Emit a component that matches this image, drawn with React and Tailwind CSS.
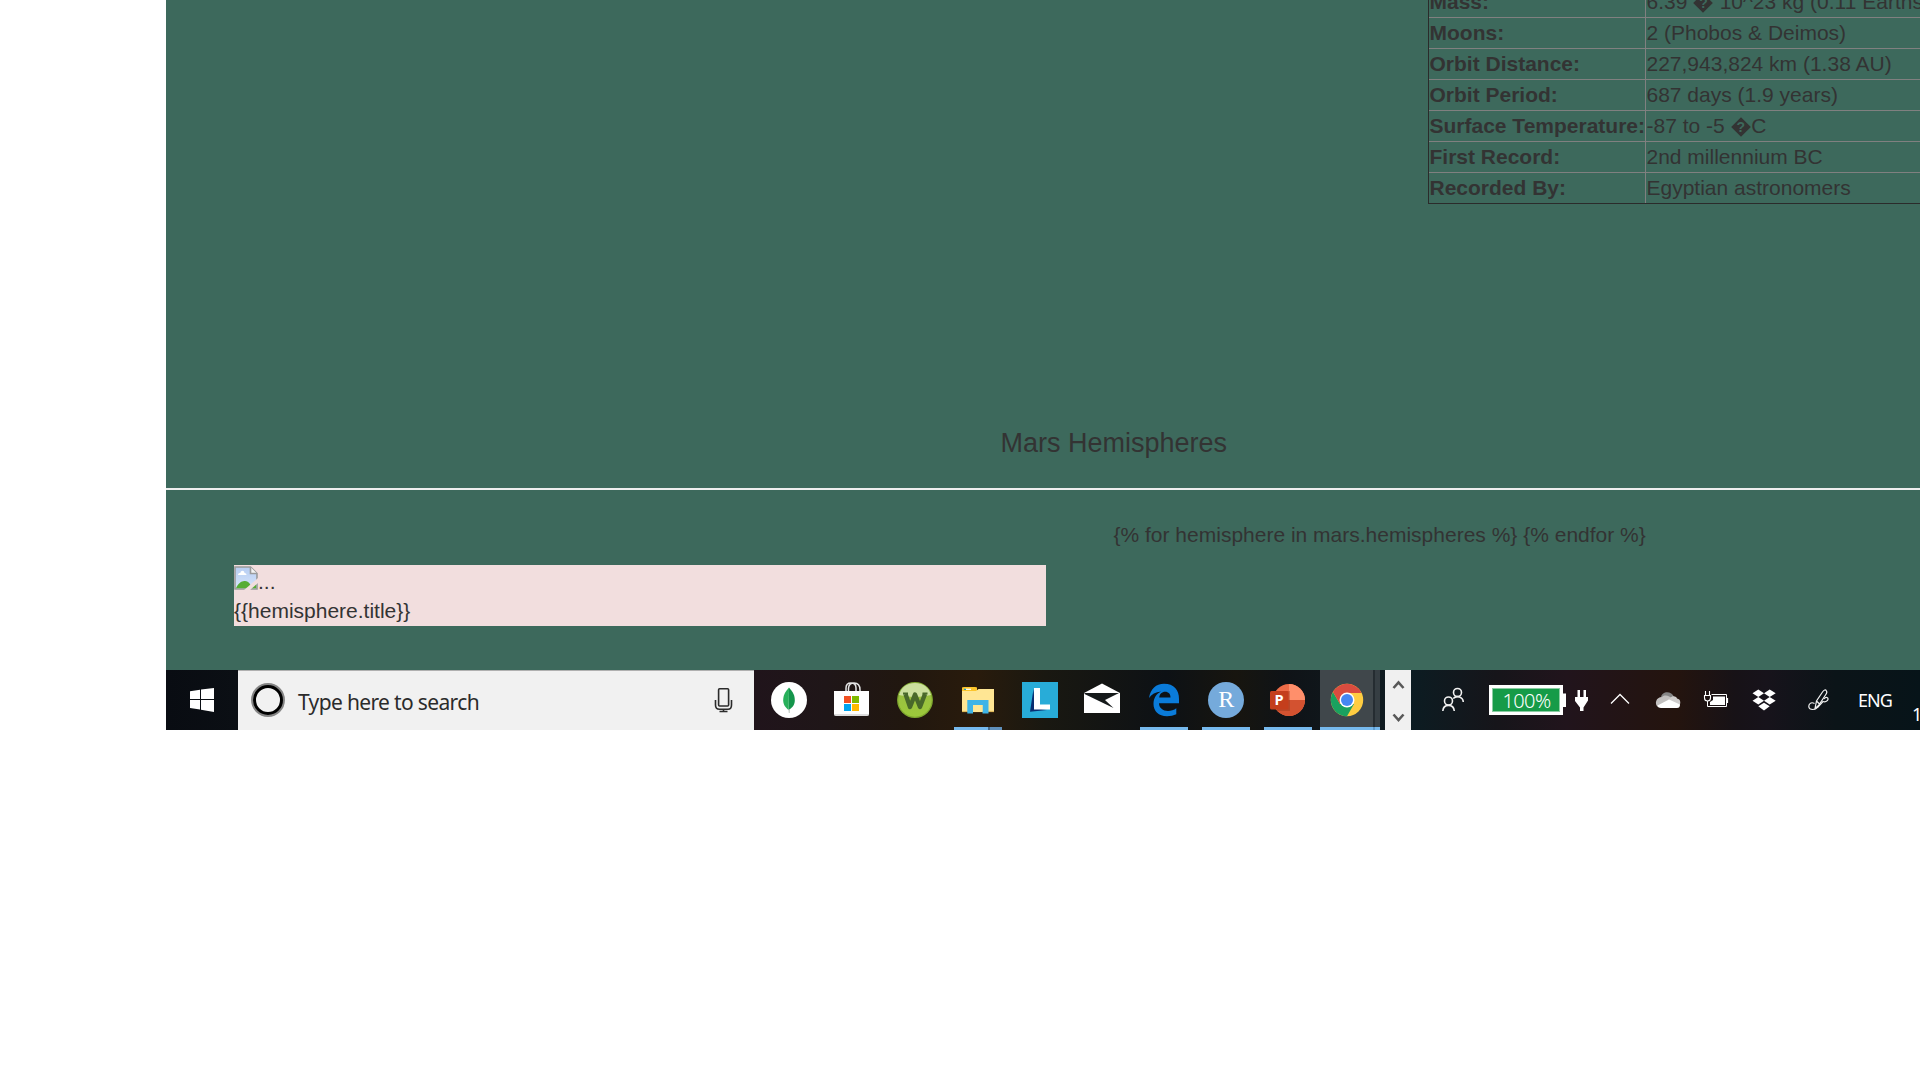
import React from "react";

const arial = "font-['Liberation_Sans',Arial,sans-serif]";

const facts = [
  ["Mass:", "6.39 \uFFFD 10^23 kg (0.11 Earths)"],
  ["Moons:", "2 (Phobos & Deimos)"],
  ["Orbit Distance:", "227,943,824 km (1.38 AU)"],
  ["Orbit Period:", "687 days (1.9 years)"],
  ["Surface Temperature:", "-87 to -5 \uFFFDC"],
  ["First Record:", "2nd millennium BC"],
  ["Recorded By:", "Egyptian astronomers"],
];

function Diamond() {
  return (
    <span className="relative inline-block h-[20px] w-[20.6px] align-[-4px]">
      <svg className="absolute inset-0" width="20" height="20" viewBox="0 0 20 20">
        <path d="M10 .2 19.8 10 10 19.8 .2 10Z" fill="#333" />
      </svg>
      <span className="absolute inset-0 text-center text-[14px] leading-[20px] font-bold text-[#3d695c]">?</span>
    </span>
  );
}

function FactTable() {
  return (
    <div className="ml-[1262px] -mt-[13px] w-[560px] border-b border-l border-[#2b2b2b]">
      {facts.map(([k, v], i) => (
        <div key={k} className={i === 6 ? "flex h-[30px]" : "flex h-[31px] border-b border-[#808080]"}>
          <div className="w-[217px] shrink-0 border-r border-[#808080] pl-[0.5px] font-bold leading-[29px] whitespace-nowrap">{k}</div>
          <div className="pl-[0.5px] leading-[29px] whitespace-nowrap">
            {v.split("\uFFFD").map((s, j) => (
              <React.Fragment key={j}>
                {j > 0 && <Diamond />}
                {s}
              </React.Fragment>
            ))}
          </div>
        </div>
      ))}
    </div>
  );
}

// Each icon's viewBox starts at its own offset along the bar, so the drawings share one coordinate space.
function Cell({ x, w, children }) {
  return (
    <svg className="h-[60px] shrink-0" width={w} height="60" viewBox={`${x} 0 ${w} 60`}>
      {children}
    </svg>
  );
}

const blue = "#76b9ed";

function BrokenImage() {
  return (
    <svg className="shrink-0" width="24" height="24" viewBox="0 0 24 24">
      <defs>
        <linearGradient id="sky" x1="0" y1="0" x2="0" y2="1">
          <stop offset="0" stopColor="#b6cdf2" />
          <stop offset="1" stopColor="#d6e4fa" />
        </linearGradient>
      </defs>
      <path d="M1 1H16.5L23 7.5V23H1Z" fill="url(#sky)" stroke="#9a9a9a" strokeWidth="1.6" />
      <path d="M4 9c0-2 2-2 2.300-2 .5-3 4-3 4.200 0 1.500 0 2 1 2 2Z" fill="#fff" />
      <path d="M2 22.300c2-5 6-7.800 9-7.300 4 0 6 4 6.500 7.300Z" fill="#57ad35" />
      <path d="M16 22.300 22.200 17v5.300Z" fill="#57ad35" />
      <path d="M16.500 1V7.500H23" fill="#f4f4f4" stroke="#9a9a9a" strokeWidth="1.600" />
      <path d="M9.500 24.500 24.500 11.500V16.500L15.500 24.500Z" fill="#f2dede" />
    </svg>
  );
}

function Taskbar() {
  return (
    <div className="flex h-[60px] w-full bg-[linear-gradient(90deg,#090c12_0px,#0b0f14_72px,#20141b_588px,#1f1618_660px,#21170f_740px,#291b0c_810px,#191811_880px,#0d1115_1000px,#17150f_1070px,#0f1317_1120px,#101b20_1219px,#0c1c22_1245px,#16151a_1330px,#21141c_1400px,#24140e_1510px,#171217_1570px,#17131b_1600px,#0b1418_1670px,#071419_1754px)]">
      <Cell x={0} w={72}>
        <path d="M24 21.200 34 19.800V29H24ZM35 19.600 48 18V29H35ZM24 30H34V39.400L24 38ZM35 30H48V42L35 39.700Z" fill="#fff" />
      </Cell>
      <div className="flex h-[60px] w-[516px] shrink-0 border-t border-[#b0b0b0] bg-[#f1f1f1]">
        <svg width="60" height="59" viewBox="0 1 60 59" className="shrink-0">
          <circle cx="30" cy="30" r="15.600" fill="none" stroke="#858585" strokeWidth="2.700" />
          <circle cx="30" cy="30" r="13.500" fill="none" stroke="#000" strokeWidth="3" />
        </svg>
        <div className="w-[412px] font-['Noto_Sans','Open_Sans',sans-serif] text-[21px] leading-[62px] tracking-[-0.65px] text-[#2b2b2b]">Type here to search</div>
        <svg width="44" height="59" viewBox="544 1 44 59" className="shrink-0" fill="none" stroke="#2b2b2b" strokeWidth="1.600">
          <rect x="552.600" y="18.700" width="10" height="17.300" rx="1" />
          <path d="M549.500 30V35Q549.500 39.300 553.500 39.300H562Q565.500 39.300 565.500 35V30M557.500 39.300V41.500M553.500 41.500H561.500" />
        </svg>
      </div>

      {/* MongoDB Compass */}
      <Cell x={754} w={66}>
        <circle cx="789" cy="30" r="18" fill="#fff" />
        <path d="M789 17.500C785 22 783.200 25 783.200 30.500 783.200 35 786 38 788.600 40Z" fill="#27b05a" />
        <path d="M789 17.500C793 22 794.800 25 794.800 30.500 794.800 35 792 38 788.600 40Z" fill="#14954b" />
        <path d="M788.500 39H789.800L789.600 43H788.800Z" fill="#aebbb2" />
      </Cell>
      {/* Store */}
      <Cell x={820} w={62}>
        <path d="M846 22V18Q846 13 851 13 856 13 856 18V22M848.500 22V18Q849 13 854 13 860 13 860 20V22" fill="none" stroke="#e5e5e5" strokeWidth="1.500" />
        <path d="M834 21H869V44Q869 46 867 46H836Q834 46 834 44Z" fill="#fff" />
        <path d="M834.500 45H868.500" stroke="#bbb" strokeWidth="1" />
        <path d="M844 26H851V33H844Z" fill="#f25022" />
        <path d="M852 26H859V33H852Z" fill="#7fba00" />
        <path d="M844 34H851V41H844Z" fill="#00a4ef" />
        <path d="M852 34H859V41H852Z" fill="#ffb900" />
      </Cell>
      {/* Webroot */}
      <Cell x={882} w={64}>
        <defs>
          <linearGradient id="wr" x1="0" y1="0" x2="0" y2="1">
            <stop offset="0" stopColor="#9abd45" />
            <stop offset="1" stopColor="#9cc93a" />
          </linearGradient>
        </defs>
        <circle cx="915" cy="30" r="17.300" fill="url(#wr)" stroke="#7fa82f" strokeWidth="1.200" />
        <path d="M899 25C901 17 907 13 915 13S929 17 931 25Q915 29 899 25Z" fill="#d5e5ae" opacity=".85" />
        <path d="M905.500 24 910 37 915 24.500 920 37 925 24" fill="none" stroke="#49692a" strokeWidth="4.400" strokeLinejoin="round" />
        <path d="M903 23.500H908M922.500 23.500H927.500" stroke="#49692a" strokeWidth="2" />
      </Cell>
      {/* File Explorer */}
      <Cell x={946} w={62}>
        <path d="M962 19Q962 17 964 17H975Q977 17 977 19V22H962Z" fill="#fcc52d" />
        <path d="M962 21H976L978.500 19H994V42H962Z" fill="#ffe694" />
        <path d="M962 20.500H975L977 18.500V17.500H962Z" fill="#fcc52d" />
        <path d="M964.500 19.300H971" stroke="#fff" strokeWidth="1.200" />
        <path d="M964 19.300H966" stroke="#20a3b2" strokeWidth="1.200" />
        <path d="M962 41.500H994" stroke="#dfb95a" strokeWidth="1.200" />
        <path d="M967.300 30H988.500V43.500H982.500V35H973V43.500H967.300Z" fill="#3eb4e7" />
        <path d="M973 35H982.500V42H973Z" fill="#ffe694" />
        <path d="M954 57H988V60H954Z" fill={blue} />
        <path d="M988 57H990V60H988Z" fill="#46698a" />
        <path d="M990 57H1002V60H990Z" fill="#6090bb" />
      </Cell>
      {/* L tile */}
      <Cell x={1008} w={62}>
        <path d="M1022 12H1058V48H1022Z" fill="#28acd8" />
        <path d="M1033.500 19 1030 41.800 1047 40 1035 38Z" fill="#082d70" />
        <path d="M1034 18H1040V34.500H1050V39.500H1034Z" fill="#fff" />
      </Cell>
      {/* Mail */}
      <Cell x={1070} w={62}>
        <path d="M1084 23 1102 13.500 1120 23V43H1084Z" fill="#fff" />
        <path d="M1084.500 23H1119L1105 30 1113.500 38 1084.500 24Z" fill="#15191a" />
      </Cell>
      {/* Edge */}
      <Cell x={1132} w={62}>
        <path d="M1149 28C1150.500 19 1156 13.800 1164 13.800 1174 13.800 1179 20 1179 29V33.300H1159C1159 38 1163 41 1168 41 1171 41 1174 40 1176.300 38.300V44.200C1173.500 45.500 1170.500 46.200 1167 46.200 1158.500 46.200 1153.500 41 1153.500 34 1153.500 28 1156.500 23.800 1161 21.600 1155.500 22 1151.500 24.500 1149 28ZM1159.200 27.500H1170.500C1170.500 24 1168.500 21.800 1165.200 21.800S1159.700 24 1159.200 27.500Z" fill="#0a7bd9" fillRule="evenodd" />
        <path d="M1140 57H1188V60H1140Z" fill={blue} />
      </Cell>
      {/* RStudio */}
      <Cell x={1194} w={62}>
        <circle cx="1226" cy="30" r="18" fill="#75aadb" />
        <text x="1226.300" y="37" textAnchor="middle" fontFamily="Liberation Serif" fontSize="24" fill="#fff">R</text>
        <path d="M1202 57H1250V60H1202Z" fill={blue} />
      </Cell>
      {/* PowerPoint */}
      <Cell x={1256} w={64}>
        <circle cx="1289" cy="30" r="16" fill="#ed6c47" />
        <path d="M1289 14A16 16 0 0 1 1305 30H1289Z" fill="#ff8f6b" />
        <path d="M1273 30H1305A16 16 0 0 1 1273 30Z" fill="#d35230" />
        <path d="M1277 21H1290V41H1277Z" fill="#91361f" opacity=".4" />
        <rect x="1270" y="21" width="18.500" height="18.500" rx="1.500" fill="#c43e1c" />
        <text x="1279" y="35.200" textAnchor="middle" fontFamily="Open Sans" fontWeight="bold" fontSize="14.500" fill="#fff">P</text>
        <path d="M1264 57H1312V60H1264Z" fill={blue} />
      </Cell>
      {/* Chrome */}
      <Cell x={1320} w={65}>
        <path d="M1320 0H1373V60H1320Z" fill="#40474b" />
        <path d="M1373 0H1375V60H1373Z" fill="#252c31" />
        <path d="M1375 0H1380V60H1375Z" fill="#363e43" />
        <circle cx="1347" cy="30" r="16.200" fill="#ffcd41" />
        <path d="M1333 21.900A16.200 16.200 0 0 0 1347 46.200L1354 34 1340 34Z" fill="#1aa15f" />
        <path d="M1333 21.900A16.200 16.200 0 0 1 1361 21.900V23H1347L1340 34Z" fill="#da4c3f" />
        <circle cx="1347" cy="30" r="7.500" fill="#fff" />
        <circle cx="1347" cy="30" r="6" fill="#4587f3" />
        <path d="M1320 57H1373V60H1320ZM1375 57H1380V60H1375Z" fill={blue} />
        <path d="M1373 57H1375V60H1373Z" fill="#5f9bcc" />
      </Cell>
      <Cell x={1385} w={26}>
        <path d="M1385 0H1411V60H1385Z" fill="#f0f0f0" />
        <path d="M1393.500 18 1398.500 12.500 1403.500 18M1393.500 44.500 1398.500 50 1403.500 44.500" fill="none" stroke="#585858" strokeWidth="2.600" />
      </Cell>
      {/* People */}
      <Cell x={1411} w={67}>
        <g fill="none" stroke="#f2f2f2" strokeWidth="1.600">
          <circle cx="1457.500" cy="22.500" r="4" />
          <circle cx="1448.500" cy="31" r="4" />
          <path d="M1442.800 41C1443.500 33.500 1453.500 33.500 1454.300 41M1453.200 28.500C1457 24.800 1463 27 1463.300 32" />
        </g>
      </Cell>
      {/* Battery with level */}
      <div className="flex w-[85px] shrink-0 items-center pl-[11px]">
        <div className="flex h-[30px] w-[74px] items-center justify-center border-[3px] border-white bg-[#169b48] pt-[2px] pl-[1px] font-['Noto_Sans','Open_Sans',sans-serif] text-[20px] font-light leading-[24px] tracking-[-0.6px] text-white outline -outline-offset-[4px] outline-[#8bcda3]">
          100%
        </div>
      </div>
      <Cell x={1563} w={33}>
        <path d="M1563 23.500H1566V37H1563Z" fill="#fff" />
        <path d="M1577.500 20H1580V27H1583.500V20H1586V27H1588V30.500L1583.500 37.500V41H1580V37.500L1575 31V27H1577.500Z" fill="#fff" />
      </Cell>
      <Cell x={1596} w={54}>
        <path d="M1611 33.500 1620 24.500 1629 33.500" fill="none" stroke="#fff" strokeWidth="1.300" />
      </Cell>
      {/* OneDrive */}
      <Cell x={1650} w={44}>
        <path d="M1661 27C1662 20.500 1672 20.500 1674 27L1669 32Z" fill="#858585" />
        <path d="M1658 37C1654 34 1656 27 1662 27 1665 24 1670 26 1672 29L1660 36Z" fill="#c2c0bf" />
        <path d="M1670 28C1673 24.500 1677 27 1677 28.500 1681 29 1681 34 1679 36L1668 30Z" fill="#cfcdcc" />
        <path d="M1657.500 35.500 1669 29.500 1680 34.500Q1680 38 1677 38H1661Q1658 38 1657.500 35.500Z" fill="#fff" />
      </Cell>
      {/* Power plug */}
      <Cell x={1694} w={46}>
        <path d="M1711.500 24.500H1726.500V36.500H1707.500V31" fill="none" stroke="#fff" strokeWidth="1" />
        <path d="M1713 26.500H1725V35H1710V32L1713 30Z" fill="#fff" />
        <path d="M1727.500 28V33" stroke="#fff" strokeWidth="1.200" />
        <path d="M1705.500 21V25M1709.500 21V25M1704.500 25.500H1710.500V28Q1710.500 31 1707.500 31 1704.500 31 1704.500 28Z" fill="none" stroke="#fff" strokeWidth="1.100" />
      </Cell>
      {/* Dropbox */}
      <Cell x={1740} w={54}>
        <path d="M1758.300 19.500 1764 23.200 1758.300 27 1752.500 23.200ZM1769.700 19.500 1775.700 23.200 1769.700 27 1764 23.200ZM1758.300 27 1764 30.700 1758.300 34.500 1752.500 30.700ZM1769.700 27 1775.700 30.700 1769.700 34.500 1764 30.700ZM1764 32.700 1769.700 36.200 1764 40.500 1758.300 36.200Z" fill="#fff" />
      </Cell>
      {/* Pen workspace */}
      <Cell x={1794} w={58}>
        <g fill="none" stroke="#f4f4f4" strokeWidth="1.200">
          <path d="M1815 38.500 1816.500 31 1822.500 22Q1825 18.500 1826.500 21 1827.500 22.500 1825.500 25L1818.500 35.500ZM1816.500 31 1819.500 34" />
          <path d="M1814.500 33.500C1811 31.500 1808.500 34 1808.800 37 1809.500 40.500 1815.500 40 1817.500 37.500L1823 31.500C1826 33 1830 29 1827 27.500Q1825.500 27 1824 29" />
        </g>
      </Cell>
      <div className="w-[58px] shrink-0 pl-[6px] font-['Noto_Sans','Open_Sans',sans-serif] text-[18px] leading-[61px] tracking-[-1px] text-white">ENG</div>
      <div className="w-[10px] shrink-0 overflow-hidden pt-[31px] pl-[2px] font-['Noto_Sans','Open_Sans',sans-serif] text-[18px] leading-[26px] text-white">1</div>
    </div>
  );
}

export default function App() {
  return (
    <div className="h-[1080px] w-[1920px] overflow-hidden bg-white pl-[166px]">
      <div className={`h-[670px] w-[1754px] overflow-hidden bg-[#3d695c] text-[21px] text-[#333] ${arial}`}>
        <FactTable />
        <h2 className="mt-[224px] pl-[834.5px] text-[27px] leading-[30px]">Mars Hemispheres</h2>
        <div className="mt-[30px] h-[2px] bg-[#eee]" />
        <p className="mt-[30px] pl-[947.5px] leading-[30px]">{"{% for hemisphere in mars.hemispheres %} {% endfor %}"}</p>
        <div className="mt-[15px] ml-[68px] h-[61px] w-[812px] bg-[#f2dede]">
          <div className="flex h-[31px] pt-px">
            <BrokenImage />
            <span className="leading-[32px]">...</span>
          </div>
          <div className="leading-[30px]">{"{{hemisphere.title}}"}</div>
        </div>
      </div>
      <Taskbar />
    </div>
  );
}
